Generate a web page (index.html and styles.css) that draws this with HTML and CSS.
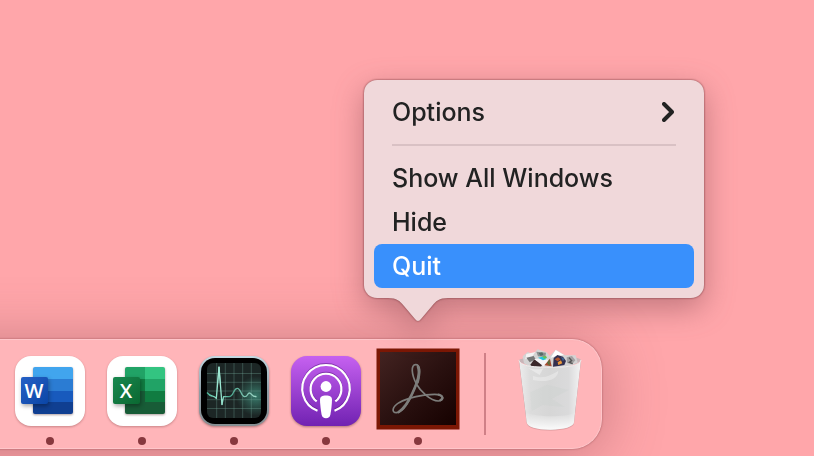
FILE: index.html
```html
<!DOCTYPE html>
<html lang="en">
<head>
<meta charset="utf-8">
<meta name="viewport" content="width=device-width, initial-scale=1">
<title>Dock</title>
<link rel="stylesheet" href="styles.css">
</head>
<body>
<nav class="dock" aria-label="Dock">
  <div class="item running">
    <button class="app" type="button" aria-label="Word">
      <svg viewBox="0 0 92 92">
        <defs>
          <linearGradient id="wordTile" x1="0" y1="0" x2="1" y2="1"><stop offset="0" stop-color="#2560c6"/><stop offset="1" stop-color="#0b46a6"/></linearGradient>
          <clipPath id="book"><rect x="29" y="22" width="40" height="47" rx="2"/></clipPath>
        </defs>
        <rect class="plate" x="11" y="11" width="70" height="70" rx="16"/>
        <g class="lift"><g clip-path="url(#book)">
          <rect x="29" y="22" width="40" height="12" fill="#41a5ee"/>
          <rect x="29" y="34" width="40" height="12" fill="#2b7cd3"/>
          <rect x="29" y="46" width="40" height="11" fill="#185abd"/>
          <rect x="29" y="57" width="40" height="12" fill="#103f91"/>
        </g></g>
        <rect class="tile" x="17" y="32" width="27" height="27" rx="2" fill="url(#wordTile)"/>
        <text class="letter" x="30" y="53">W</text>
      </svg>
    </button>
  </div>
  <div class="item running">
    <button class="app" type="button" aria-label="Excel">
      <svg viewBox="0 0 92 92">
        <defs><linearGradient id="excelTile" x1="0" y1="0" x2="1" y2="1"><stop offset="0" stop-color="#18884f"/><stop offset="1" stop-color="#0b6831"/></linearGradient></defs>
        <rect class="plate" x="11" y="11" width="70" height="70" rx="16"/>
        <g class="lift"><g clip-path="url(#book)">
          <rect x="29" y="22" width="20" height="12" fill="#21a366"/>
          <rect x="49" y="22" width="20" height="12" fill="#33c481"/>
          <rect x="29" y="34" width="20" height="12" fill="#107c41"/>
          <rect x="49" y="34" width="20" height="12" fill="#21a366"/>
          <rect x="29" y="46" width="40" height="23" fill="#185c37"/>
          <rect x="49" y="46" width="20" height="11" fill="#107c41"/>
        </g></g>
        <rect class="tile" x="17" y="32" width="27" height="27" rx="2" fill="url(#excelTile)"/>
        <text class="letter" x="30" y="53">X</text>
      </svg>
    </button>
  </div>
  <div class="item running">
    <button class="app" type="button" aria-label="Activity Monitor">
      <svg viewBox="0 0 92 92">
        <defs>
          <linearGradient id="bezel" x1="0" y1="0" x2="0" y2="1"><stop offset="0" stop-color="#c3d9e2"/><stop offset=".5" stop-color="#8e9da5"/><stop offset="1" stop-color="#878f93"/></linearGradient>
          <radialGradient id="glow" cx=".9" cy=".6" r=".36"><stop offset="0" stop-color="#38796a"/><stop offset="1" stop-color="#1c2625"/></radialGradient>
          <linearGradient id="trace" x1="0" y1="0" x2="1" y2="0"><stop offset="0" stop-color="#46b496"/><stop offset=".25" stop-color="#a5f2dc"/><stop offset=".45" stop-color="#48a58d"/><stop offset="1" stop-color="#a2d8c8"/></linearGradient>
        </defs>
        <rect class="lift" x="11" y="11" width="70" height="70" rx="16" fill="url(#bezel)"/>
        <rect x="13" y="13" width="66" height="66" rx="14" fill="#000"/>
        <rect x="19" y="18" width="54" height="55" rx="6" fill="url(#glow)"/>
        <path d="M28.7 18v55M37.3 18v55M46 18v55M54.7 18v55M63.3 18v55M19 28.5h54M19 37.3h54M19 46h54M19 54.7h54M19 63.5h54" stroke="#75aa9d" stroke-opacity=".42" stroke-width=".8" fill="none"/>
        <path d="M19 47.500C21 50 22 50.600 24 51C26 51.500 27 51.500 28.300 53.500L31 22L34 59.500L35.600 51.700H41C46 51.700 45 43.300 49.300 43.300C53 43.300 53 51.500 56.500 51.700C60 52 59 48 61.500 48C64 48 63 51.700 68.500 51.700" fill="none" stroke="url(#trace)" stroke-width="1.300" stroke-linejoin="round"/>
        <path d="M31 22L29.500 40M31 22L32.500 40M34 54V60" stroke="#9ee7d2" stroke-width=".9" fill="none"/>
      </svg>
    </button>
  </div>
  <div class="item running">
    <button class="app" type="button" aria-label="Podcasts">
      <svg viewBox="0 0 92 92">
        <defs><linearGradient id="violet" x1="0" y1="0" x2="0" y2="1"><stop offset="0" stop-color="#c661f0"/><stop offset="1" stop-color="#7122b2"/></linearGradient></defs>
        <rect class="lift" x="11" y="11" width="70" height="70" rx="16" fill="url(#violet)"/>
        <g class="etched" fill="none" stroke="#fff">
          <path d="M37.500 65.800A23.700 23.700 0 1 1 54.500 65.800" stroke-width="2.200"/>
          <path d="M36.700 56.400A15.400 15.400 0 1 1 55.300 56.400" stroke-width="2.200"/>
        </g>
        <circle cx="46" cy="41.500" r="5.400" fill="#fff"/>
        <path d="M46 50.400C49.800 50.400 52 51.800 52 54.500C52 59 51.200 65 50.400 69.500C49.900 72.200 48.500 73.200 46 73.200S42.100 72.200 41.600 69.500C40.800 65 40 59 40 54.500C40 51.800 42.200 50.400 46 50.400Z" fill="#fff"/>
      </svg>
    </button>
  </div>
  <div class="item running">
    <button class="app" type="button" aria-label="Acrobat" aria-haspopup="menu" aria-expanded="true">
      <svg viewBox="0 0 92 92">
        <defs>
          <linearGradient id="maroon" x1="0" y1="0" x2="1" y2="1"><stop offset="0" stop-color="#432321"/><stop offset=".5" stop-color="#2a1110"/><stop offset="1" stop-color="#160100"/></linearGradient>
        </defs>
        <rect x="4.500" y="3.500" width="83" height="81" fill="#7b1704"/>
        <rect x="8" y="7" width="76" height="73" fill="url(#maroon)"/>
        <g transform="translate(-4 -5) scale(.33333)" fill="none" stroke="#7d7d7b" stroke-linecap="round" stroke-linejoin="round">
          <path d="M150 128C158 96 157 74 143 74C128 74 130 102 145 132C157 153 187 183 211 183C229 181 230 163 200 163C166 163 120 173 93 188C72 201 70 218 85 218C108 218 132 170 150 116" stroke-width="5"/>
          <path d="M150 80C158 99 146 133 132 162C119 190 105 207 92 216" stroke-width="8"/>
          <path d="M212 164C225 168 227 175 217 181" stroke-width="7"/>
        </g>
      </svg>
    </button>
    <div class="popup">
      <div class="menu" role="menu">
        <button class="row" type="button" role="menuitem" aria-haspopup="menu">Options
          <svg class="chevron" viewBox="0 0 12 20"><path d="M2 2l8 8-8 8"/></svg>
        </button>
        <hr class="rule">
        <button class="row" type="button" role="menuitem">Show All Windows</button>
        <button class="row" type="button" role="menuitem">Hide</button>
        <button class="row selected" type="button" role="menuitem">Quit</button>
      </div>
      <svg class="pointer" viewBox="0 0 60 25"><path d="M0 0V1C9 1 12 4 16 9L27 22Q30 26 33 22L44 9C48 4 51 1 60 1V0Z"/></svg>
    </div>
  </div>
  <div class="divider" role="separator"></div>
  <div class="item">
    <button class="app" type="button" aria-label="Trash">
      <svg viewBox="0 0 92 92">
        <defs>
          <linearGradient id="can" x1="0" y1="0" x2="1" y2="0"><stop offset="0" stop-color="#ededed"/><stop offset=".18" stop-color="#dcdcdc"/><stop offset=".5" stop-color="#d6d6d6"/><stop offset=".8" stop-color="#dadadb"/><stop offset="1" stop-color="#f4f4f4"/></linearGradient>
          <linearGradient id="base" x1="0" y1="0" x2="0" y2="1"><stop offset="0" stop-color="#fff" stop-opacity="0"/><stop offset="1" stop-color="#fff" stop-opacity=".9"/></linearGradient>
        </defs>
        <g transform="translate(-29 -15) scale(.33333)">
          <path d="M132 91C140 76 310 72 318 90C314 116 136 116 132 91Z" fill="#c9b5b8"/>
          <path d="M143 79L158 66L174 73L188 58L215 67L224 78L243 59L270 76L302 76L308 98L270 113H170L147 100Z" fill="#d4d3d3"/>
          <path d="M154 72L181 66L168 85L151 88Z" fill="#f4f2f2"/>
          <path d="M184 65L213 68L211 81L189 79Z" fill="#8b9090"/>
          <path d="M191 69L202 67L205 74L197 78Z" fill="#566b66"/>
          <path d="M154 83L176 78L182 88L164 97Z" fill="#777"/>
          <path d="M166 104L178 88L203 102L198 110H170Z" fill="#3b282b"/>
          <path d="M177 87L214 84L221 95L207 110Z" fill="#f6f4f6"/>
          <path d="M189 83L202 80L216 87L204 91Z" fill="#23c5dc"/>
          <path d="M202 79L213 78L216 84L207 86Z" fill="#6abf52"/>
          <path d="M208 106L225 86L230 109Z" fill="#a74b31"/>
          <path d="M216 98L224 88L224 108Z" fill="#55713d"/>
          <path d="M227 83L242 60L267 75L242 79Z" fill="#fff"/>
          <path d="M236 84L247 75L264 80L273 93L268 105L234 111Z" fill="#343050"/>
          <path d="M239 88L249 82L257 88L248 94Z" fill="#b1532d"/>
          <path d="M248 97L258 91L262 100L250 105Z" fill="#ec983a"/>
          <path d="M258 80L268 86L264 94Z" fill="#3d6490"/>
          <path d="M275 82L291 78L301 91L291 103L276 99Z" fill="#a3a1a2"/>
          <path d="M282 83L290 92L283 97L293 101" fill="none" stroke="#555" stroke-width="4"/>
          <path class="lift" d="M132 91C136 106 166 112 225 112C284 112 314 106 318 90L297 277C296 291 267 299 226 299C185 299 157 292 155 277Z" fill="url(#can)"/>
          <path d="M151 246C178 262 270 263 300 248L297 277C296 291 267 299 226 299C185 299 157 292 155 277Z" fill="url(#base)"/>
          <path d="M174 137C205 149 231 134 250 122C249 145 222 160 174 150Z" fill="#fff" opacity=".3"/>
          <path d="M158 113C180 119 197 119 206 113L194 135Z" fill="#f5f5f5" opacity=".5"/>
          <path d="M166 187L216 164L282 180L230 206L270 231L203 225L170 244Z" fill="#bfc8c4" opacity=".15"/>
          <path d="M132 91C136 106 166 112 225 112C284 112 314 106 318 90" fill="none" stroke="#efeded" stroke-width="3"/>
        </g>
      </svg>
    </button>
  </div>
</nav>
</body>
</html>
```
FILE: styles.css
```css
* {
  box-sizing: border-box;
}

body {
  margin: 0;
  min-height: 100vh;
  padding-bottom: 7px;
  display: flex;
  flex-direction: column;
  justify-content: flex-end;
  align-items: flex-start;
  overflow: hidden;
  background: #ffa6aa;
  color: #222;
  font-family: Inter, "Liberation Sans", sans-serif;
}

button {
  margin: 0;
  padding: 0;
  border: 0;
  background: none;
  color: inherit;
  font: inherit;
}

svg {
  display: block;
}

/* The dock runs on past the left edge of the window. */
.dock {
  display: flex;
  margin-left: -96px;
  padding: 5px 5px 3px 100px;
  border: 1px solid #ffc6ca;
  border-left: 0;
  border-radius: 0 30px 30px 0;
  background: #ffb5b9;
  box-shadow: 0 0 2px rgb(110 40 45 / 60%), 0 4px 60px rgb(120 60 70 / 42%);
}

.item {
  position: relative;
  width: 92px;
  min-height: 100px;
}

.app {
  display: block;
  width: 100%;
}

.app svg {
  width: 100%;
}

.running::after {
  content: "";
  display: block;
  width: 8px;
  height: 8px;
  margin: 0 auto;
  border-radius: 50%;
  background: #87383e;
}

.divider {
  width: 2px;
  margin: 8px 18px 10px 20px;
  background: #cf8087;
}

.plate {
  fill: #fff;
  filter: drop-shadow(0 1px 1px rgb(100 40 40 / 35%));
}

.lift {
  filter: drop-shadow(0 1px 1px rgb(80 40 40 / 45%));
}

.tile {
  filter: drop-shadow(1px 2px 2px rgb(0 0 0 / 35%));
}

.etched {
  filter: drop-shadow(0 -1px 0 rgb(80 20 120 / 50%));
}

.letter {
  fill: #fff;
  font-family: "Open Sans", "Liberation Sans", sans-serif;
  font-size: 20px;
  font-weight: 600;
  text-anchor: middle;
}

/* The menu floats over the desktop, anchored to its dock item. */
.popup {
  position: absolute;
  bottom: calc(100% + 23px);
  left: -8px;
  width: 340px;
  filter: drop-shadow(0 0 1px rgb(90 30 35 / 75%)) drop-shadow(0 10px 15px rgb(110 55 65 / 42%));
}

.menu {
  display: flex;
  flex-direction: column;
  padding: 10px;
  border-radius: 13px;
  background: #f0d8da;
}

.row {
  display: flex;
  align-items: center;
  justify-content: space-between;
  height: 44px;
  padding: 0 20px 0 18px;
  border-radius: 8px;
  font-size: 25px;
  font-weight: 500;
  text-align: left;
  white-space: nowrap;
}

.selected {
  background: #3990fc;
  color: #fff;
}

.rule {
  width: auto;
  height: 2px;
  margin: 10px 18px;
  border: 0;
  background: #d9c1c4;
}

.chevron {
  width: 12px;
  fill: none;
  stroke: #222;
  stroke-width: 4;
  stroke-linecap: round;
  stroke-linejoin: round;
}

.pointer {
  width: 60px;
  margin: -1px 0 0 24px;
  fill: #f0d8da;
}
```
